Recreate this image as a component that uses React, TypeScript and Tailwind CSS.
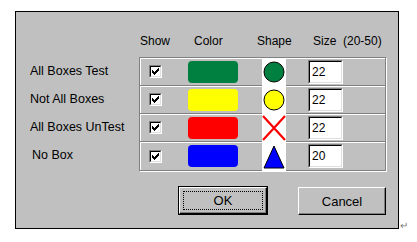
import React from 'react';

type Shape = 'circle' | 'cross' | 'triangle';

interface BoxRow {
    label: string;
    color: string;
    swatch: string;
    shape: Shape;
    size: string;
    shift?: boolean;
}

const rows: BoxRow[] = [
    { label: 'All Boxes Test', color: '#008040', swatch: 'bg-[#008040]', shape: 'circle', size: '22' },
    { label: 'Not All Boxes', color: '#ffff00', swatch: 'bg-[#ffff00]', shape: 'circle', size: '22' },
    { label: 'All Boxes UnTest', color: '#ff0000', swatch: 'bg-[#ff0000]', shape: 'cross', size: '22' },
    { label: 'No Box', color: '#0000ff', swatch: 'bg-[#0000ff]', shape: 'triangle', size: '20', shift: true },
];

// classic sunken checkbox, always ticked here
const CheckBox = () => (
    <div className="w-[13px] h-[13px] border border-t-[#808080] border-l-[#808080] border-r-white border-b-white">
        <div className="w-full h-full bg-white border border-t-black border-l-black border-r-[#dfdfdf] border-b-[#dfdfdf] flex items-center justify-center">
            <svg width="7" height="7" viewBox="0 0 7 7" shapeRendering="crispEdges">
                <path d="M6 0h1v1h-1zM5 1h2v1h-2zM0 2h1v1h-1zM4 2h3v1h-3zM0 3h2v1h-2zM3 3h3v1h-3zM0 4h5v1h-5zM1 5h3v1h-3zM2 6h1v1h-1z" fill="#000" />
            </svg>
        </div>
    </div>
);

const ShapeIcon = ({ shape, color }: { shape: Shape; color: string }) => {
    if (shape === 'circle') {
        return (
            <svg width="22" height="22" viewBox="0 0 22 22">
                <circle cx="11" cy="11" r="10" fill={color} stroke="#000" strokeWidth="1" />
            </svg>
        );
    }
    if (shape === 'cross') {
        return (
            <svg width="24" height="26" viewBox="0 0 24 26">
                <path d="M1 1L23 25M23 1L1 25" stroke={color} strokeWidth="2.2" />
            </svg>
        );
    }
    return (
        <svg width="22" height="24" viewBox="0 0 22 24">
            <path d="M11 1L21 23H1Z" fill={color} stroke="#000" strokeWidth="1" strokeLinejoin="round" />
        </svg>
    );
};

const SizeInput = ({ value }: { value: string }) => (
    <div className="w-[35px] h-[24px] border border-t-[#808080] border-l-[#808080] border-r-white border-b-white">
        <div className="w-full h-full bg-white border border-t-black border-l-black border-r-[#dfdfdf] border-b-[#dfdfdf] pl-[2px] pt-[3px] text-[12px] leading-[14px]">
            {value}
        </div>
    </div>
);

export default function App() {
    return (
        <div className="w-[417px] h-[242px] bg-white font-['Liberation_Sans',Arial,sans-serif] text-black">
            <div className="flex items-end pl-[15px] pt-[11px]">
                <div className="w-[384px] h-[218px] border border-black bg-[#c0c0c0] flex flex-col">
                    {/* column headings */}
                    <div className="flex mt-[22px] h-[14px] text-[12px] leading-[14px]">
                        <div className="w-[124px]" />
                        <div className="w-[54px]">Show</div>
                        <div className="w-[63px]">Color</div>
                        <div className="w-[56px]">Shape</div>
                        <div>Size&nbsp; (20-50)</div>
                    </div>

                    <div className="flex mt-[9px]">
                        <div className="w-[123px] flex flex-col text-[12.5px] leading-[14px]">
                            {rows.map((r) => (
                                <div key={r.label} className={`h-[28px] flex items-center ${r.shift ? 'pl-[16px]' : 'pl-[14px]'}`}>
                                    {r.label}
                                </div>
                            ))}
                        </div>

                        <div className="w-[247px] border border-[#808080] shadow-[1px_1px_0_#fff] flex flex-col">
                            {rows.map((r, i) => (
                                <div
                                    key={r.label}
                                    className={`h-[28px] flex items-center shadow-[inset_1px_1px_0_#fff] ${i < rows.length - 1 ? 'border-b border-[#808080]' : 'h-[27px]'}`}
                                >
                                    <div className="ml-[9px]">
                                        <CheckBox />
                                    </div>
                                    <div className={`ml-[26px] w-[50px] h-[22px] rounded-[4px] ${r.swatch}`} />
                                    <div className="ml-[24px] w-[24px] h-full mt-[1px] bg-white flex items-center justify-center">
                                        <ShapeIcon shape={r.shape} color={r.color} />
                                    </div>
                                    <div className="ml-[22px]">
                                        <SizeInput value={r.size} />
                                    </div>
                                </div>
                            ))}
                        </div>
                    </div>

                    {/* buttons */}
                    <div className="flex items-start mt-[15px] pl-[162px] text-[13px] leading-[15px]">
                        <button className="w-[90px] h-[29px] border border-black bg-[#c0c0c0] p-0">
                            <div className="w-full h-full border border-t-white border-l-white border-r-black border-b-black shadow-[inset_-1px_-1px_0_#808080] p-[3px]">
                                <div className="w-full h-full border border-dotted border-black flex items-center justify-center">
                                    OK
                                </div>
                            </div>
                        </button>
                        <button className="ml-[30px] mt-[1px] w-[88px] h-[28px] border border-t-white border-l-white border-r-black border-b-black shadow-[inset_-1px_-1px_0_#808080] bg-[#c0c0c0] flex items-center justify-center">
                            Cancel
                        </button>
                    </div>
                </div>
                <span className="ml-[1px] mb-[-2px] text-[10px] leading-[10px] text-[#808080]">↵</span>
            </div>
        </div>
    );
}
